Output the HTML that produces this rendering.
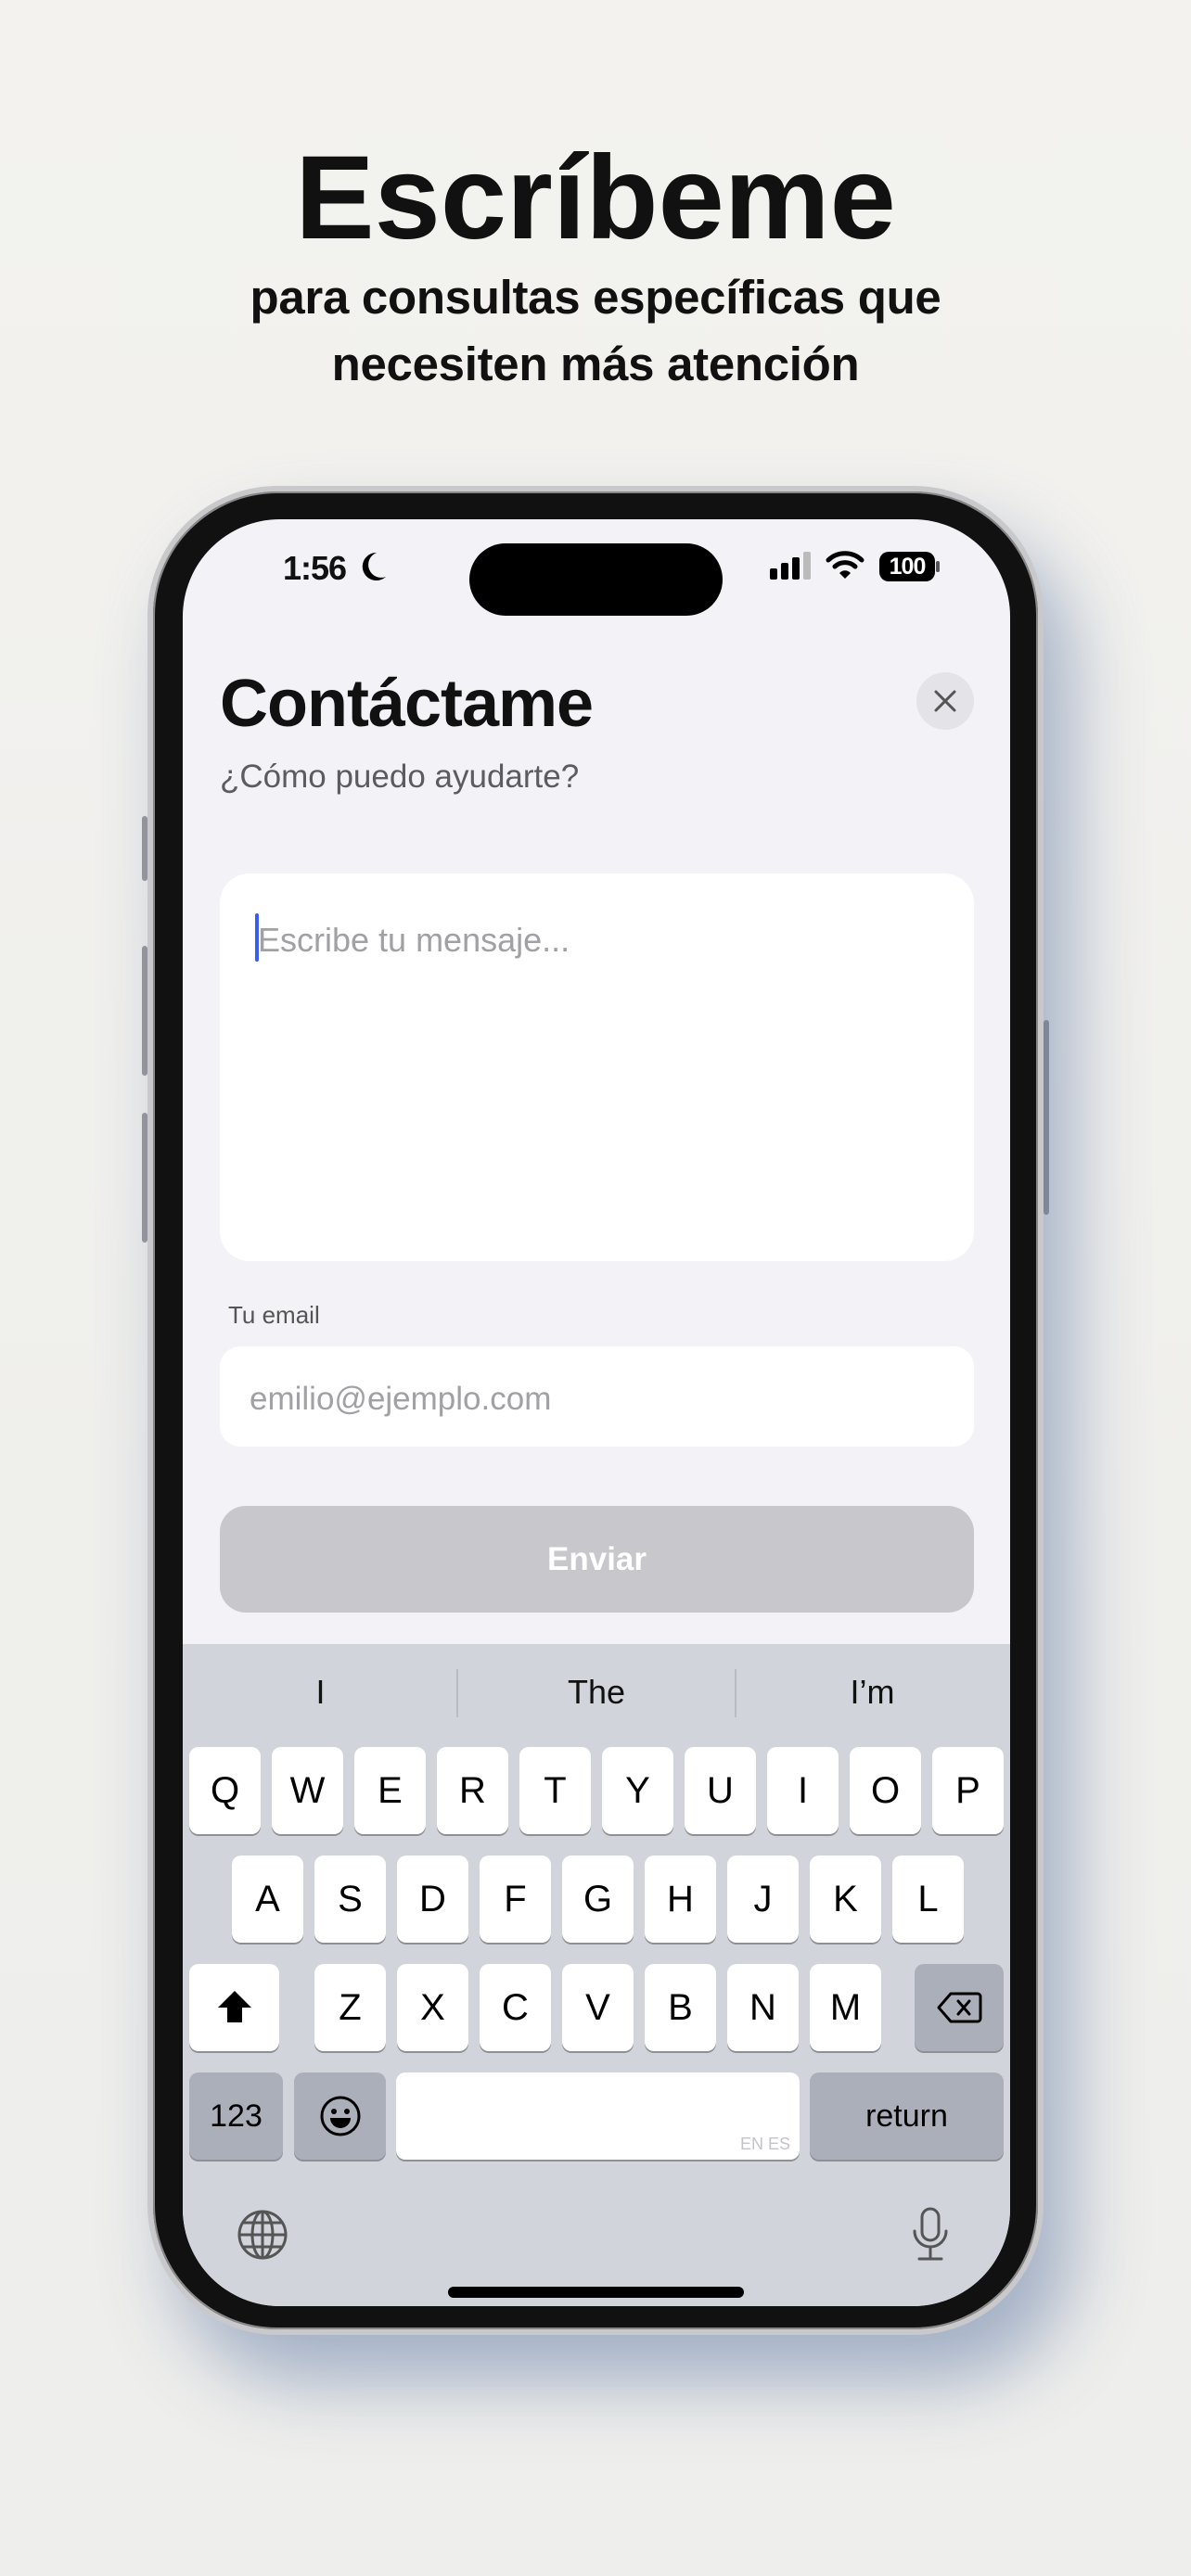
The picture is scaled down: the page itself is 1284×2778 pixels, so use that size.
<!DOCTYPE html>
<html><head><meta charset="utf-8"><style>
*{margin:0;padding:0;box-sizing:border-box}
html,body{width:1284px;height:2778px;overflow:hidden}
body{background:linear-gradient(180deg,#f3f2ef 0%,#efefec 60%,#eeeeec 100%);font-family:"Liberation Sans",sans-serif;position:relative;color:#111}
.abs{position:absolute}
.title{left:0;width:1284px;top:150px;text-align:center;font-weight:700;font-size:128px;letter-spacing:0px;color:#111;line-height:1}
.sub{left:0;width:1284px;top:285px;text-align:center;font-weight:700;font-size:51px;line-height:72px;letter-spacing:-0.3px;color:#111}
.phone{left:159px;top:524px;width:966px;height:1994px;border-radius:140px;background:#111;border:6px solid #c9c9cc;box-shadow:0 0 0 2px #888 inset,30px 50px 80px rgba(70,100,150,0.45)}
.btnside{background:#9a9a9e;width:6px;border-radius:3px}
.screen{left:197px;top:560px;width:892px;height:1927px;border-radius:105px;background:#f2f2f7;overflow:hidden}
.k{position:absolute;background:#fff;border-radius:10px;box-shadow:0 2px 0 #8e9096;font-size:40px;text-align:center;color:#000;display:flex;align-items:center;justify-content:center}
.g{background:#abafba}
</style></head><body>
<div class="abs title">Escríbeme</div>
<div class="abs sub">para consultas específicas que<br>necesiten más atención</div>
<div class="abs btnside" style="left:153px;top:880px;height:70px"></div>
<div class="abs btnside" style="left:153px;top:1020px;height:140px"></div>
<div class="abs btnside" style="left:153px;top:1200px;height:140px"></div>
<div class="abs btnside" style="left:1125px;top:1100px;height:210px"></div>
<div class="abs phone"></div>
<div class="abs screen">
 <div class="abs" style="left:108px;top:32px;font-size:36px;font-weight:700;letter-spacing:-1px">1:56</div>
 <svg class="abs" style="left:191px;top:34px" width="30" height="34" viewBox="0 0 30 34"><path d="M18 2 A15 15 0 1 0 28 28 A13 13 0 0 1 18 2Z" fill="#000"/></svg>
 <div class="abs" style="left:309px;top:26px;width:273px;height:78px;border-radius:39px;background:#000"></div>
 <svg class="abs" style="left:633px;top:35px" width="48" height="32"><rect x="0" y="18" width="8" height="12" rx="2"/><rect x="12" y="12" width="8" height="18" rx="2"/><rect x="24" y="6" width="8" height="24" rx="2"/><rect x="36" y="0" width="8" height="30" rx="2" fill="#bbb"/></svg>
 <svg class="abs" style="left:693px;top:33px" width="42" height="32" viewBox="0 0 42 32"><path d="M3 11 A26 26 0 0 1 39 11" stroke="#000" stroke-width="5" fill="none" stroke-linecap="round"/><path d="M10 18 A16 16 0 0 1 32 18" stroke="#000" stroke-width="5" fill="none" stroke-linecap="round"/><path d="M15 25 L21 31 L27 25 A8 8 0 0 0 15 25Z" fill="#000"/></svg>
 <div class="abs" style="left:751px;top:35px;width:60px;height:32px;border-radius:10px;background:#000;color:#fff;font-weight:700;font-size:25px;text-align:center;line-height:32px;letter-spacing:-1px">100</div>
 <div class="abs" style="left:812px;top:45px;width:4px;height:12px;border-radius:2px;background:#555"></div>

 <div class="abs" style="left:40px;top:158px;font-size:72px;font-weight:700;letter-spacing:-1px">Contáctame</div>
 <div class="abs" style="left:791px;top:165px;width:62px;height:62px;border-radius:31px;background:#e3e3e8"></div>
 <svg class="abs" style="left:809px;top:183px" width="26" height="26"><path d="M3 3L23 23M23 3L3 23" stroke="#555" stroke-width="3" stroke-linecap="round"/></svg>
 <div class="abs" style="left:40px;top:258px;font-size:35px;color:#5c5c60">¿Cómo puedo ayudarte?</div>

 <div class="abs" style="left:40px;top:382px;width:813px;height:418px;border-radius:32px;background:#fff"></div>
 <div class="abs" style="left:78px;top:425px;width:4px;height:52px;background:#3a5cf0;border-radius:2px"></div>
 <div class="abs" style="left:81px;top:433px;font-size:36px;color:#a0a0a5">Escribe tu mensaje...</div>

 <div class="abs" style="left:49px;top:843px;font-size:26px;color:#555">Tu email</div>
 <div class="abs" style="left:40px;top:892px;width:813px;height:108px;border-radius:22px;background:#fff"></div>
 <div class="abs" style="left:72px;top:929px;font-size:35px;color:#a0a0a5">emilio@ejemplo.com</div>

 <div class="abs" style="left:40px;top:1064px;width:813px;height:115px;border-radius:28px;background:#c7c7cc;color:#fff;font-size:35px;font-weight:700;text-align:center;line-height:115px">Enviar</div>

 <div class="abs" style="left:0;top:1213px;width:892px;height:720px;background:#d1d4db"></div>
 <div class="abs" style="left:0;top:1244px;width:297px;text-align:center;font-size:36px">I</div>
 <div class="abs" style="left:297px;top:1244px;width:298px;text-align:center;font-size:36px">The</div>
 <div class="abs" style="left:595px;top:1244px;width:297px;text-align:center;font-size:36px">I’m</div>
 <div class="abs" style="left:295px;top:1240px;width:2px;height:52px;background:#b9bcc4"></div>
 <div class="abs" style="left:595px;top:1240px;width:2px;height:52px;background:#b9bcc4"></div>

 <div class="k" style="left:7px;top:1324px;width:77px;height:94px">Q</div>
 <div class="k" style="left:96px;top:1324px;width:77px;height:94px">W</div>
 <div class="k" style="left:185px;top:1324px;width:77px;height:94px">E</div>
 <div class="k" style="left:274px;top:1324px;width:77px;height:94px">R</div>
 <div class="k" style="left:363px;top:1324px;width:77px;height:94px">T</div>
 <div class="k" style="left:452px;top:1324px;width:77px;height:94px">Y</div>
 <div class="k" style="left:541px;top:1324px;width:77px;height:94px">U</div>
 <div class="k" style="left:630px;top:1324px;width:77px;height:94px">I</div>
 <div class="k" style="left:719px;top:1324px;width:77px;height:94px">O</div>
 <div class="k" style="left:808px;top:1324px;width:77px;height:94px">P</div>

 <div class="k" style="left:53px;top:1441px;width:77px;height:94px">A</div>
 <div class="k" style="left:142px;top:1441px;width:77px;height:94px">S</div>
 <div class="k" style="left:231px;top:1441px;width:77px;height:94px">D</div>
 <div class="k" style="left:320px;top:1441px;width:77px;height:94px">F</div>
 <div class="k" style="left:409px;top:1441px;width:77px;height:94px">G</div>
 <div class="k" style="left:498px;top:1441px;width:77px;height:94px">H</div>
 <div class="k" style="left:587px;top:1441px;width:77px;height:94px">J</div>
 <div class="k" style="left:676px;top:1441px;width:77px;height:94px">K</div>
 <div class="k" style="left:765px;top:1441px;width:77px;height:94px">L</div>

 <div class="k" style="left:7px;top:1558px;width:97px;height:94px"><svg width="44" height="44" viewBox="0 0 44 44"><path d="M22 4 L40 22 L30 22 L30 38 L14 38 L14 22 L4 22Z" fill="#000"/></svg></div>
 <div class="k" style="left:142px;top:1558px;width:77px;height:94px">Z</div>
 <div class="k" style="left:231px;top:1558px;width:77px;height:94px">X</div>
 <div class="k" style="left:320px;top:1558px;width:77px;height:94px">C</div>
 <div class="k" style="left:409px;top:1558px;width:77px;height:94px">V</div>
 <div class="k" style="left:498px;top:1558px;width:77px;height:94px">B</div>
 <div class="k" style="left:587px;top:1558px;width:77px;height:94px">N</div>
 <div class="k" style="left:676px;top:1558px;width:77px;height:94px">M</div>
 <div class="k g" style="left:789px;top:1558px;width:96px;height:94px"><svg width="50" height="36" viewBox="0 0 50 36"><path d="M16 3 H45 A3 3 0 0 1 48 6 V30 A3 3 0 0 1 45 33 H16 L3 18Z" fill="none" stroke="#000" stroke-width="3" stroke-linejoin="round"/><path d="M24 11 L36 25 M36 11 L24 25" stroke="#000" stroke-width="3" stroke-linecap="round"/></svg></div>

 <div class="k g" style="left:7px;top:1675px;width:101px;height:94px;font-size:34px">123</div>
 <div class="k g" style="left:120px;top:1675px;width:99px;height:94px"><svg width="46" height="46" viewBox="0 0 46 46"><circle cx="23" cy="23" r="20" fill="none" stroke="#000" stroke-width="3"/><circle cx="16" cy="18" r="3"/><circle cx="30" cy="18" r="3"/><path d="M12 25 H34 A11 11 0 0 1 12 25Z" fill="#000"/></svg></div>
 <div class="k" style="left:230px;top:1675px;width:435px;height:94px"><span style="position:absolute;right:10px;bottom:6px;font-size:18px;color:#c4c4c8">EN ES</span></div>
 <div class="k g" style="left:676px;top:1675px;width:209px;height:94px;font-size:34px">return</div>

 <svg class="abs" style="left:58px;top:1822px" width="56" height="56" viewBox="0 0 56 56" fill="none" stroke="#555" stroke-width="3"><circle cx="28" cy="28" r="25"/><ellipse cx="28" cy="28" rx="11" ry="25"/><line x1="28" y1="3" x2="28" y2="53"/><line x1="3" y1="28" x2="53" y2="28"/><path d="M7 15 H49 M7 41 H49"/></svg>
 <svg class="abs" style="left:784px;top:1820px" width="44" height="60" viewBox="0 0 44 60" fill="none" stroke="#555" stroke-width="3" stroke-linecap="round"><rect x="13" y="2" width="18" height="34" rx="9"/><path d="M5 26 A17 17 0 0 0 39 26"/><line x1="22" y1="43" x2="22" y2="55"/><line x1="10" y1="56" x2="34" y2="56"/></svg>

 <div class="abs" style="left:286px;top:1906px;width:319px;height:12px;border-radius:6px;background:#000"></div>
</div>
</body></html>
